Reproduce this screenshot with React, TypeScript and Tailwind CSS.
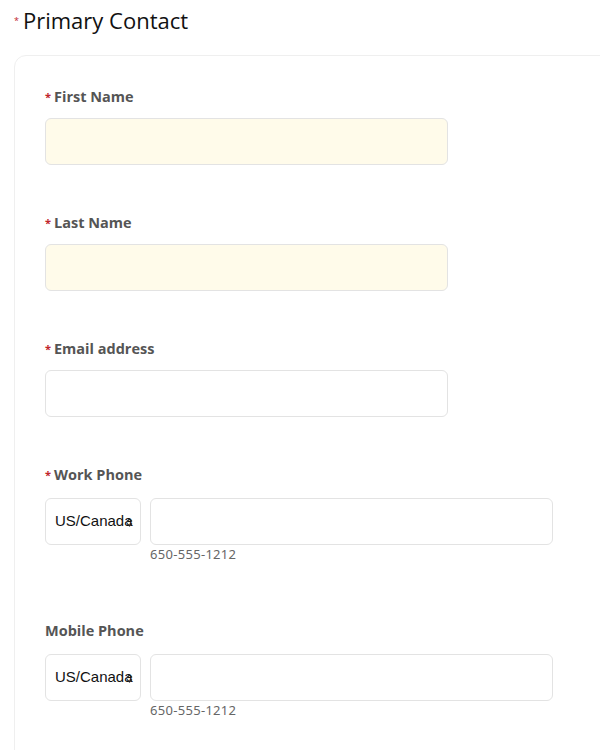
import React from 'react'

// Primary contact form — single card, fields stacked

const FONT = "font-['Open_Sans','Noto_Sans',sans-serif]"

function Req() {
  return <span className="mr-[3px] text-[11px] leading-none text-[#c0242b] relative -top-[1px]">*</span>
}

function Label({ text, required }: { text: string; required?: boolean }) {
  return (
    <div className="flex items-center h-5 text-[14.5px] font-bold text-[#555555]">
      {required && <Req />}
      <span>{text}</span>
    </div>
  )
}

function TextField({ label, required, filled }: { label: string; required?: boolean; filled?: boolean }) {
  return (
    <div className="mb-12">
      <Label text={label} required={required} />
      <div
        className={
          'mt-[11px] w-[403px] h-[47px] rounded-md border border-[#e3e3e3] ' +
          (filled ? 'bg-[#fffbea]' : 'bg-white')
        }
      />
    </div>
  )
}

function PhoneField({ label, required }: { label: string; required?: boolean }) {
  return (
    <div>
      <Label text={label} required={required} />
      <div className="mt-[13px] flex gap-[9px]">
        <div className="relative w-[96px] h-[47px] rounded-md border border-[#e3e3e3] bg-white flex items-center pl-[9px]">
          <span className="font-['Liberation_Sans',Arial,sans-serif] text-[15px] text-[#111]">US/Canada</span>
          <svg className="absolute left-[80px] top-[19px]" width="7" height="9" viewBox="0 0 7 9" fill="none">
            <path d="M1 3.5 L3.5 1 L6 3.5 M1 5.5 L3.5 8 L6 5.5" stroke="#222" strokeWidth="1.2" />
          </svg>
        </div>
        <div>
          <div className="w-[403px] h-[47px] rounded-md border border-[#e3e3e3] bg-white" />
          <div className="mt-[1px] h-4 text-[13px] leading-4 tracking-[0.3px] text-[#666] font-['Noto_Sans',sans-serif]">650-555-1212</div>
        </div>
      </div>
    </div>
  )
}

export default function App() {
  return (
    <div className={'w-[600px] h-[750px] overflow-hidden bg-white ' + FONT}>
      <div className="flex items-center pl-[14px] pt-[5px] h-[35px]">
        <span className="mr-[4px] text-[9px] text-[#c0242b] relative top-[1px]">*</span>
        <h1 className="text-[22px] leading-[30px] text-[#111] font-normal">Primary Contact</h1>
      </div>
      <div className="ml-[14px] mt-[20px] w-[640px] h-[760px] rounded-tl-xl border border-[#efefef] pl-[30px] pt-[31px]">
        <TextField label="First Name" required filled />
        <TextField label="Last Name" required filled />
        <TextField label="Email address" required />
        <div className="mb-[59px]">
          <PhoneField label="Work Phone" required />
        </div>
        <PhoneField label="Mobile Phone" />
      </div>
    </div>
  )
}
